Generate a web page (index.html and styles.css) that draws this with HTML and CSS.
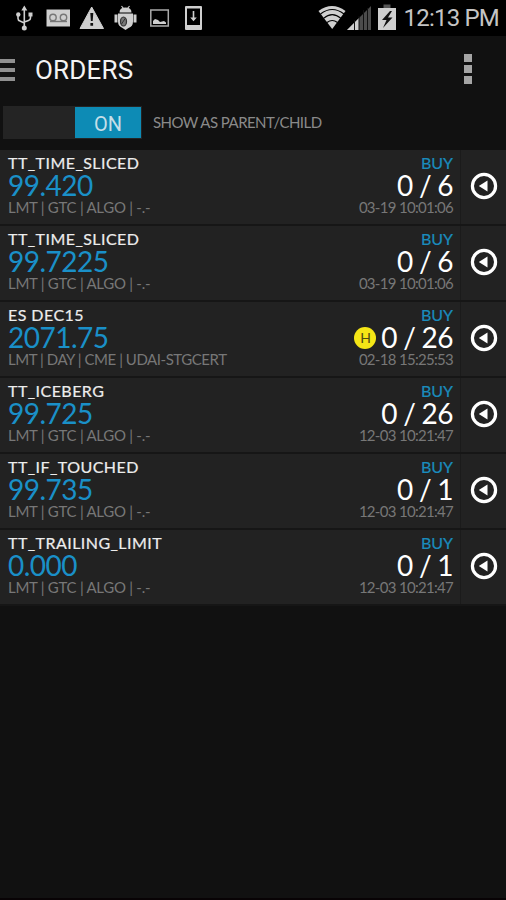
FILE: index.html
```
<!DOCTYPE html>
<html lang="en">
<head>
    <meta charset="UTF-8">
    <meta name="viewport" content="width=device-width, initial-scale=1.0">
    <title>Orders</title>
    <link rel="stylesheet" href="styles.css">
</head>
<body>
    <svg class="sprite">
        <symbol id="arrow" viewBox="0 0 28 28">
            <circle cx="14" cy="14" r="11.6" fill="none" stroke="#fff" stroke-width="3.2"/>
            <path d="M8.8 14 17.5 8.5V19.5z" fill="#fff"/>
        </symbol>
    </svg>

    <div class="status-bar">
        <svg class="notifications" width="220" height="36" fill="#cfcfcf">
            <!-- usb -->
            <g fill="none" stroke="#cfcfcf" stroke-width="1.6">
                <path d="M24.3 8V28M18 15v3.5q0 2 2 2.5l4.3 2M30.5 15v3q0 2-2 2.5l-4.2 1.5"/>
            </g>
            <path d="M24.3 5.5 27.3 10.5H21.3z"/>
            <circle cx="24.3" cy="28" r="2.5"/>
            <circle cx="18.3" cy="14.5" r="2.2"/>
            <path d="M28.5 12.5h4v4h-4z"/>
            <!-- voicemail -->
            <path d="M46.5 9.5H70V26.5H46.5z"/>
            <g fill="none" stroke="#777" stroke-width="1.4">
                <circle cx="53" cy="17.5" r="3.2"/>
                <circle cx="63.5" cy="17.5" r="3.2"/>
                <path d="M50 21.5H67"/>
            </g>
            <!-- warning -->
            <path d="M91.7 7 103.5 28.5H80z" stroke="#cfcfcf" stroke-linejoin="round"/>
            <path d="M90.3 13h3l-.6 8h-1.8zM90.4 23h2.7v2.7h-2.7z" fill="#111"/>
            <!-- android debug -->
            <path d="M119.5 12.5q0-5 6-5t6 5zM118 13.5h15v8q0 5-4.5 6.5l-3 2-3-2q-4.5-2-4.5-6.5zM114.5 14.5h3v8h-3zM133.5 14.5h3v8h-3z"/>
            <path d="M121.5 6l2 2.5M129.5 6l-2 2.5" stroke="#cfcfcf" stroke-width="1.2"/>
            <ellipse cx="123.5" cy="21.5" rx="3" ry="4.5" fill="#777" stroke="#333" stroke-width="1.2"/>
            <path d="M121.5 24l4-6" stroke="#333"/>
            <!-- picture -->
            <path d="M150.8 10h17.5v16h-17.5z" fill="none" stroke="#aaa" stroke-width="1.5"/>
            <path d="M153 24v-3l2-2 3 1 2 2 4-1 2 1.5V24z"/>
            <!-- download to device -->
            <path fill-rule="evenodd" d="M186 6h15q1 0 1 1v22q0 1-1 1h-15q-1 0-1-1V7q0-1 1-1zM187 8.5v16.5h13V8.5z"/>
            <path d="M192.7 11h1.6v6.5h2.5l-3.3 3.7-3.3-3.7h2.5z"/>
        </svg>
        <svg class="system" width="84" height="36" fill="#cfcfcf">
            <!-- wifi -->
            <path d="M2.5 11Q16 1 29.5 11L16.2 29z"/>
            <g fill="none" stroke="#000" stroke-width="1.1">
                <path d="M4.5 14Q16.2 5 28 14M7.5 18.3Q16.2 11 25 18.3M11 22.5Q16.2 18.5 21.5 22.5"/>
            </g>
            <!-- signal -->
            <path d="M31 30 55 6V30z" fill="#4c4c4c"/>
            <path d="M31 30 43 18V30z"/>
            <path d="M38.5 20v10M43 16v14M47.5 10v20M51.500 8v22" stroke="#111"/>
            <!-- battery charging -->
            <path d="M67.500 4.500h7V8h-7z" fill="#555"/>
            <path d="M62 8h18v22H62z"/>
            <path d="M74 11 66 20h4.500l-3.500 8 9.500-10.500h-4.500l4-6.500z" fill="#111"/>
        </svg>
        <span class="clock">12:13 PM</span>
    </div>

    <div class="header">
        <div class="menu-icon"><i></i><i></i><i></i></div>
        <h1>ORDERS</h1>
        <div class="overflow-icon"><i></i><i></i><i></i></div>
    </div>

    <div class="filter">
        <div class="toggle"><span class="on">ON</span></div>
        <span class="filter-label">SHOW AS PARENT/CHILD</span>
    </div>

    <div class="orders">
        <div class="order">
            <div class="info">
                <div class="name">TT_TIME_SLICED</div>
                <div class="price">99.420</div>
                <div class="meta">LMT | GTC | ALGO | -.-</div>
            </div>
            <div class="fill">
                <div class="side">BUY</div>
                <div class="qty">0 / 6</div>
                <div class="date">03-19 10:01:06</div>
            </div>
            <div class="action"><svg><use href="#arrow"/></svg></div>
        </div>
        <div class="order">
            <div class="info">
                <div class="name">TT_TIME_SLICED</div>
                <div class="price">99.7225</div>
                <div class="meta">LMT | GTC | ALGO | -.-</div>
            </div>
            <div class="fill">
                <div class="side">BUY</div>
                <div class="qty">0 / 6</div>
                <div class="date">03-19 10:01:06</div>
            </div>
            <div class="action"><svg><use href="#arrow"/></svg></div>
        </div>
        <div class="order">
            <div class="info">
                <div class="name">ES DEC15</div>
                <div class="price">2071.75</div>
                <div class="meta long">LMT | DAY | CME | UDAI-STGCERT</div>
            </div>
            <div class="fill">
                <div class="side">BUY</div>
                <div class="qty"><span class="hold">H</span>0 / 26</div>
                <div class="date">02-18 15:25:53</div>
            </div>
            <div class="action"><svg><use href="#arrow"/></svg></div>
        </div>
        <div class="order">
            <div class="info">
                <div class="name">TT_ICEBERG</div>
                <div class="price">99.725</div>
                <div class="meta">LMT | GTC | ALGO | -.-</div>
            </div>
            <div class="fill">
                <div class="side">BUY</div>
                <div class="qty">0 / 26</div>
                <div class="date">12-03 10:21:47</div>
            </div>
            <div class="action"><svg><use href="#arrow"/></svg></div>
        </div>
        <div class="order">
            <div class="info">
                <div class="name">TT_IF_TOUCHED</div>
                <div class="price">99.735</div>
                <div class="meta">LMT | GTC | ALGO | -.-</div>
            </div>
            <div class="fill">
                <div class="side">BUY</div>
                <div class="qty">0 / 1</div>
                <div class="date">12-03 10:21:47</div>
            </div>
            <div class="action"><svg><use href="#arrow"/></svg></div>
        </div>
        <div class="order">
            <div class="info">
                <div class="name">TT_TRAILING_LIMIT</div>
                <div class="price">0.000</div>
                <div class="meta">LMT | GTC | ALGO | -.-</div>
            </div>
            <div class="fill">
                <div class="side">BUY</div>
                <div class="qty">0 / 1</div>
                <div class="date">12-03 10:21:47</div>
            </div>
            <div class="action"><svg><use href="#arrow"/></svg></div>
        </div>
    </div>
</body>
</html>
```
FILE: styles.css
```
* {
    box-sizing: border-box;
}

body {
    margin: 0;
    min-height: 900px;
    background: #111;
    color: #fff;
    font-family: Lato, sans-serif;
    overflow: hidden;
    border-bottom: 2px solid #080305;
}

.sprite {
    display: none;
}

.status-bar {
    display: flex;
    height: 36px;
    background: #000;
}

.system {
    margin-left: 96px;
}

.system, .notifications {
    flex: none;
}

.clock {
    flex: 1;
    padding-right: 7px;
    text-align: right;
    font: 24px/37px Roboto, sans-serif;
    letter-spacing: -0.8px;
    color: #c4c4c4;
    white-space: nowrap;
}

.header {
    display: flex;
    align-items: center;
    height: 67px;
    padding-right: 34px;
}

.header h1 {
    margin: 1px auto 0 20px;
    font: 26px/30px Roboto, sans-serif;
    letter-spacing: 0.2px;
    color: #f4f4f4;
}

.menu-icon {
    display: grid;
    gap: 5px;
    width: 15px;
}

.menu-icon i {
    height: 4px;
    background: #909090;
}

.overflow-icon {
    display: grid;
    gap: 3px;
    margin-bottom: 1px;
}

.overflow-icon i {
    width: 8px;
    height: 8px;
    background: #a5a5a5;
}

.filter {
    display: flex;
    align-items: center;
    height: 47px;
    padding: 0 0 8px 3px;
}

.toggle {
    display: flex;
    justify-content: flex-end;
    width: 139px;
    height: 33px;
    padding: 1px 1px 1px 0;
    background: #242424;
}

.on {
    width: 66px;
    background: #0d8bb5;
    color: #c5dfe8;
    font: 20px/34px Roboto, sans-serif;
    text-align: center;
}

.filter-label {
    margin: 0 0 2px 11px;
    font-size: 15px;
    letter-spacing: -0.55px;
    color: #8a8a8a;
}

.order {
    display: flex;
    height: 76px;
    border-bottom: 2px solid #161616;
    background: #222;
    white-space: nowrap;
}

.info {
    flex: 1;
    padding: 3px 0 0 8px;
}

.fill {
    padding: 3px 7px 0 0;
    text-align: right;
}

.name, .side {
    font-size: 16px;
    line-height: 20px;
}

.name {
    letter-spacing: 0.45px;
    color: #ededed;
    -webkit-text-stroke: 0.2px #ededed;
}

.side {
    color: #1a8cbd;
    -webkit-text-stroke: 0.2px #1a8cbd;
}

.price, .qty {
    font-size: 28px;
    line-height: 24px;
    letter-spacing: -0.5px;
}

.price {
    color: #1a90c8;
}

.meta, .date {
    font-size: 15px;
    line-height: 20px;
    color: #777;
}

.meta {
    letter-spacing: -0.27px;
}

.meta.long {
    letter-spacing: -0.45px;
}

.date {
    letter-spacing: -0.7px;
}

.qty {
    display: flex;
    justify-content: flex-end;
    align-items: center;
    height: 24px;
    word-spacing: -0.5px;
}

.hold {
    width: 22px;
    height: 22px;
    margin: 1px 5px 0 0;
    border-radius: 50%;
    background: #f5e616;
    color: #4d4a12;
    font-size: 14px;
    line-height: 22px;
    text-align: center;
}

.action {
    display: flex;
    align-items: center;
    justify-content: center;
    width: 46px;
    padding: 0 0 2px 1px;
    border-left: 1px solid #1b1b1b;
}

.action svg {
    width: 28px;
    height: 28px;
}
```
